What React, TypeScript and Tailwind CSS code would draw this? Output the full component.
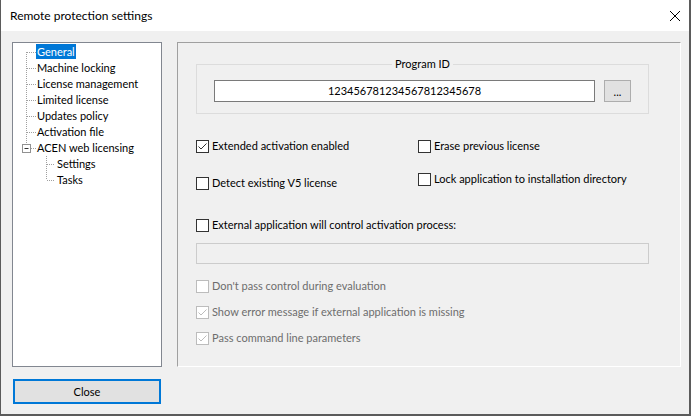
import React from "react";

interface CheckProps {
  label: string;
  checked?: boolean;
  disabled?: boolean;
  className?: string;
}

function Check({ label, checked, disabled, className = "" }: CheckProps) {
  return (
    <div className={`flex h-[13px] items-center gap-[3px] ${className}`}>
      <span
        className={`flex h-[13px] w-[13px] shrink-0 items-center justify-center border bg-white ${
          disabled ? "border-[#bcbcbc]" : "border-[#333333]"
        }`}
      >
        {checked && (
          <svg width="11" height="11" viewBox="0 0 11 11" fill="none">
            <path
              d="M1.5 5.5L4 8L9.5 2.5"
              stroke={disabled ? "#bcbcbc" : "#333333"}
              strokeWidth="1"
            />
          </svg>
        )}
      </span>
      <span
        className={`mb-[2px] whitespace-nowrap leading-[16px] ${
          disabled ? "text-[#6d6d6d]" : "text-black"
        }`}
      >
        {label}
      </span>
    </div>
  );
}

const rootItems = [
  "General",
  "Machine locking",
  "License management",
  "Limited license",
  "Updates policy",
  "Activation file",
  "ACEN web licensing",
];

function Tree() {
  return (
    <div className="relative h-[325px] w-[150px] border border-[#828790] bg-white">
      {/* connector lines */}
      <svg
        className="absolute left-0 top-0"
        width="148"
        height="160"
        viewBox="0 0 148 160"
        fill="none"
      >
        <g stroke="#a0a0a0" strokeWidth="1" strokeDasharray="1 1">
          <path d="M13.5 9V101" />
          {[0, 1, 2, 3, 4, 5].map((i) => (
            <path key={i} d={`M14 ${9.5 + 16 * i}H23`} />
          ))}
          <path d="M18 105.5H23" />
          <path d="M33.5 113V137" />
          <path d="M34 121.5H42" />
          <path d="M34 137.5H42" />
        </g>
        <rect x="9.5" y="101.5" width="8" height="8" fill="white" stroke="#919191" />
        <path d="M11.5 105.5H15.5" stroke="#333333" />
      </svg>

      <ul className="relative pt-[1px]">
        {rootItems.map((item, i) => (
          <li key={item} className="flex h-[16px] items-start pl-[23px]">
            <span
              className={`h-[15px] px-[1px] leading-[15px] whitespace-nowrap ${
                i === 0 ? "bg-[#0078d7] text-white" : "text-black"
              }`}
            >
              {item}
            </span>
          </li>
        ))}
        {["Settings", "Tasks"].map((item) => (
          <li key={item} className="flex h-[16px] items-start pl-[43px]">
            <span className="h-[15px] px-[1px] leading-[15px] text-black">
              {item}
            </span>
          </li>
        ))}
      </ul>
    </div>
  );
}

export default function App() {
  return (
    <div className="flex h-[416px] w-[691px] flex-col border-b-2 border-l border-r-2 border-[#5b5b5b] bg-[#f0f0f0] font-['Segoe_UI','Lato',sans-serif] text-[11px] text-black">
      {/* Title bar */}
      <div className="flex h-[31px] shrink-0 items-center justify-between bg-white pl-[9px] pr-[8px]">
        <span className="text-[12px] leading-[16px]">Remote protection settings</span>
        <svg width="12" height="12" viewBox="0 0 12 12" fill="none">
          <path d="M1 1L11 11M11 1L1 11" stroke="#000" strokeWidth="1" />
        </svg>
      </div>

      <div className="flex pl-[11px] pt-[11px]">
        {/* Left column */}
        <div className="flex flex-col">
          <Tree />
          <button className="ml-[1px] mt-[12px] h-[25px] w-[148px] border-2 border-[#0078d7] bg-[#e1e1e1] leading-[16px]">
            Close
          </button>
        </div>

        {/* Right panel */}
        <div className="ml-[15px] h-[325px] w-[504px] border border-b-white border-l-[#a0a0a0] border-r-white border-t-[#a0a0a0] pl-[18px] pt-[13px]">
          <fieldset className="w-[453px] border border-[#dcdcdc] pb-[11px] pl-[17px] pr-[17px] pt-[8px]">
            <legend className="mx-auto px-[3px] leading-[16px]">Program ID</legend>
            <div className="flex gap-[9px]">
              <div className="flex h-[22px] w-[381px] items-center justify-center border border-[#7a7a7a] bg-white leading-[16px]">
                123456781234567812345678
              </div>
              <button className="flex h-[22px] w-[27px] items-end justify-center border border-[#adadad] bg-[#e1e1e1] pb-[3px] leading-[12px]">
                ...
              </button>
            </div>
          </fieldset>

          <div className="mt-[26px] grid grid-cols-[222px_1fr]">
            <Check label="Extended activation enabled" checked />
            <Check label="Erase previous license" />
          </div>

          <div className="mt-[20px] grid grid-cols-[222px_1fr] items-start">
            <Check label="Detect existing V5 license" className="mt-[4px]" />
            <Check label="Lock application to installation directory" />
          </div>

          <Check
            label="External application will control activation process:"
            className="mt-[29px]"
          />

          <div className="mt-[11px] h-[21px] w-[453px] border border-[#cccccc] bg-[#f0f0f0]" />

          <Check
            label="Don't pass control during evaluation"
            disabled
            className="mt-[16px]"
          />
          <Check
            label="Show error message if external application is missing"
            checked
            disabled
            className="mt-[13px]"
          />
          <Check
            label="Pass command line parameters"
            checked
            disabled
            className="mt-[13px]"
          />
        </div>
      </div>
    </div>
  );
}
